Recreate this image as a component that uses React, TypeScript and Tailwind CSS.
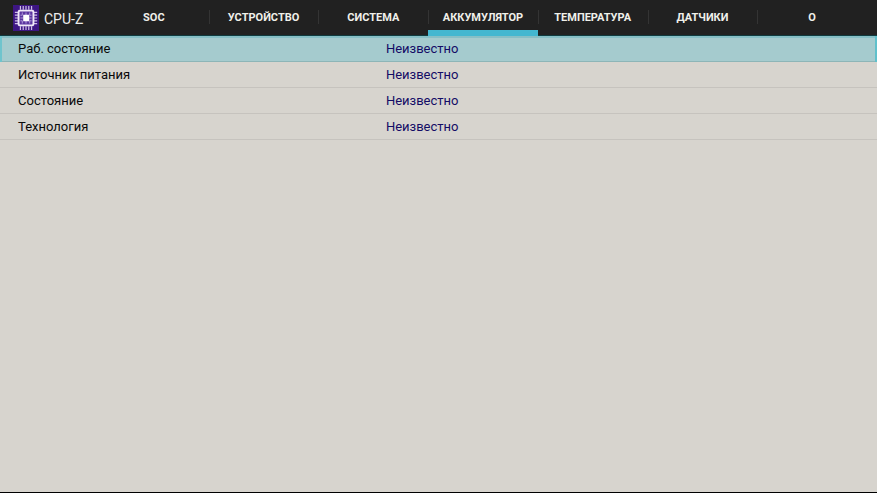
import { useState } from "react";
import { clsx } from "clsx";

interface Param {
  label: string;
  value: string;
}

const tabs = [
  "SOC",
  "УСТРОЙСТВО",
  "СИСТЕМА",
  "АККУМУЛЯТОР",
  "ТЕМПЕРАТУРА",
  "ДАТЧИКИ",
  "О",
];

const params: Param[] = [
  { label: "Раб. состояние", value: "Неизвестно" },
  { label: "Источник питания", value: "Неизвестно" },
  { label: "Состояние", value: "Неизвестно" },
  { label: "Технология", value: "Неизвестно" },
];

const pins = [8, 11, 14, 17, 20];

function Logo() {
  return (
    <svg viewBox="0 0 28 28" className="size-[26px] shrink-0" aria-hidden="true">
      <rect width="28" height="28" fill="#3d1683" />
      <rect x="5" y="5" width="18" height="18" fill="#5b35a0" />
      <g stroke="#cdbde6" strokeWidth="1.3">
        {pins.map((p) => (
          <path key={p} d={`M${p} 1v4M${p} 23v4M2 ${p}h4M22 ${p}h4`} />
        ))}
      </g>
      <rect x="6" y="6" width="16" height="16" rx="1.5" fill="none" stroke="#f0e9f8" strokeWidth="2" />
      <path
        d="M10 8v3H8M18 8v3h2M10 20v-3H8M18 20v-3h2M14 8v3M14 17v3M8 14h3M17 14h3"
        fill="none"
        stroke="#b7a2dc"
        strokeWidth="1"
      />
      <rect x="11" y="10.5" width="6.5" height="7" fill="#fff" />
    </svg>
  );
}

export default function App() {
  const [activeTab, setActiveTab] = useState("АККУМУЛЯТОР");
  const [selected, setSelected] = useState(0);

  return (
    <div className="flex flex-col h-screen bg-[#d7d4ce] border-b border-black font-[Roboto,sans-serif]">
      <header className="flex h-9 shrink-0 bg-[#212121] border-b border-[#103c40] pr-2.5">
        <div className="flex items-center gap-[5px] w-[99px] shrink-0 pl-[13px]">
          <Logo />
          <h1 className="text-sm text-[#ececec] whitespace-nowrap pt-0.5">CPU-Z</h1>
        </div>
        <nav role="tablist" className="grid grid-cols-7 flex-1">
          {tabs.map((tab, i) => (
            <button
              key={tab}
              role="tab"
              aria-selected={tab === activeTab}
              onClick={() => setActiveTab(tab)}
              className="relative flex items-center justify-center pt-0.5 text-[11px] font-bold text-[#f0f0ea]"
            >
              {tab}
              {i > 0 && <span className="absolute left-0 top-2.5 h-3.5 w-px bg-[#343434]" />}
              {tab === activeTab && (
                <span className="absolute inset-x-0 -bottom-px h-1.5 bg-[#43b7d0]" />
              )}
            </button>
          ))}
        </nav>
      </header>

      <table className="w-full table-fixed border-collapse text-[13px]">
        <tbody>
          {params.map((param, i) => (
            <tr
              key={param.label}
              onClick={() => setSelected(i)}
              className={clsx(
                "h-[26px]",
                i === selected
                  ? "bg-[#a5cbce] shadow-[inset_2px_0_#6fc4cd,inset_-2px_0_#5fc0cb,inset_0_2px_#86bfc6,inset_0_-1px_#8db5b7]"
                  : "shadow-[inset_0_-1px_#c6c3be]"
              )}
            >
              <th scope="row" className="w-[44%] pl-[18px] text-left font-normal text-[#0a0a0a]">
                {param.label}
              </th>
              <td className="text-[#140c66]">{param.value}</td>
            </tr>
          ))}
        </tbody>
      </table>
    </div>
  );
}
